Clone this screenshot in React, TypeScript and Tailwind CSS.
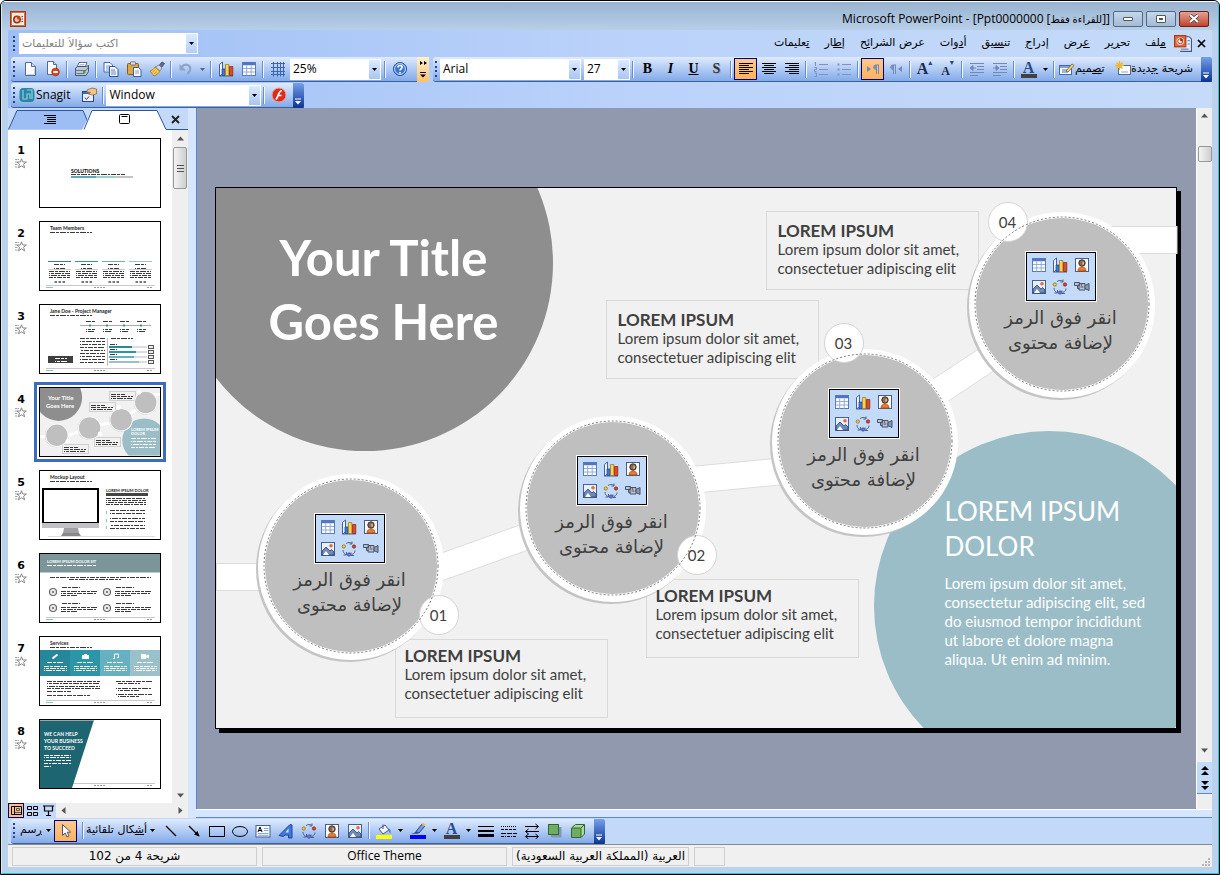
import React from 'react';

const UI = "font-['Open_Sans','DejaVu_Sans',sans-serif]";
const AR = "font-['DejaVu_Sans',sans-serif]";

/* ---------- icons ---------- */

interface IconProps {
  children: React.ReactNode;
  size?: string;
}

const Icon: React.FC<IconProps> = ({ children, size = 'size-4' }) => (
  <svg viewBox="0 0 16 16" className={`${size} shrink-0`} fill="none" aria-hidden="true">
    {children}
  </svg>
);

const PptIcon = () => (
  <Icon>
    <rect x="0.5" y="0.5" width="15" height="15" fill="#e8653a" stroke="#a93c17" />
    <rect x="2.5" y="2.5" width="11" height="11" fill="#fbe9df" stroke="#fff" />
    <circle cx="7" cy="8.5" r="3.2" fill="#f6c9a8" stroke="#a12f10" strokeWidth="1.6" />
    <path d="M7 8.5V5h0a3.5 3.5 0 0 1 3.3 3.5z" fill="#c9481f" />
    <path d="M11.5 5.5h1.5M11.5 8h1.5M11.5 10.5h1.5" stroke="#a12f10" />
  </Icon>
);

const PptDocIcon = () => (
  <Icon size="size-[18px]">
    <path d="M6.5 1.5h7l2 2v11h-10" fill="#e3ecfa" stroke="#3c5a8c" />
    <path d="M12 5h2M12 8h2M6 12.500h7" stroke="#6d87b3" />
    <rect x="0.5" y="0.5" width="10" height="10" fill="#e8653a" stroke="#a93c17" />
    <circle cx="5.5" cy="5.5" r="2.6" fill="#fff" stroke="#fbe0d2" strokeWidth="1.4" />
    <path d="M5.5 5.5V2.9A2.6 2.6 0 0 1 8 5.5z" fill="#9c3311" />
    <circle cx="5.5" cy="5.5" r="2.2" stroke="#9c3311" strokeWidth="0.8" />
  </Icon>
);

const NewIcon = () => (
  <Icon>
    <path d="M3.5 1.5h6l4 4v9h-10z" fill="#fff" stroke="#56698f" />
    <path d="M9.5 1.5v4h4" fill="#c9d9f1" stroke="#56698f" />
    <path d="M12.5 7v6.5H5" stroke="#c5d4ec" />
  </Icon>
);

const PermissionIcon = () => (
  <Icon>
    <path d="M2.5 0.5h6l3 3v10h-9z" fill="#fff" stroke="#56698f" />
    <path d="M8.5 0.5v3h3" fill="#c9d9f1" stroke="#56698f" />
    <circle cx="10.500" cy="11" r="3.800" fill="#e2481c" stroke="#a92c08" strokeWidth="0.8" />
    <path d="M8.300 11h4.400" stroke="#fff" strokeWidth="1.8" />
  </Icon>
);

const PrintIcon = () => (
  <Icon>
    <path d="M5 1.5h8l-2 5H3z" fill="#fff" stroke="#5f6d86" />
    <path d="M5.5 3.5h5M5 5h5" stroke="#9fb2d0" strokeWidth="0.8" />
    <path d="M1.5 7l2-1.5h9l2-1v6l-2.5 4h-10.5z" fill="#c0c8d8" stroke="#49566f" />
    <path d="M1.5 9.5h10.5l2-3M2.5 12.5h8" stroke="#67748e" />
    <path d="M9 11h2.5" stroke="#2fb32f" strokeWidth="1.8" />
  </Icon>
);

const CopyIcon = () => (
  <Icon>
    <path d="M1 1.5h6l2.5 2.5v7H1z" fill="#f5f9ff" stroke="#4a6ba8" />
    <path d="M3 5h4M3 7h4M3 9h3" stroke="#7b99cf" />
    <path d="M6.5 5.5h5.5l3 3v7h-8.5z" fill="#f5f9ff" stroke="#2f549b" />
    <path d="M8 9h4M8 11h5M8 13h5" stroke="#5f85c5" />
  </Icon>
);

const PasteIcon = () => (
  <Icon>
    <rect x="1.5" y="2.5" width="11" height="11" rx="1" fill="#e0a640" stroke="#8a5a12" />
    <rect x="4.5" y="0.8" width="5" height="3.2" rx="0.8" fill="#d6dbe4" stroke="#5d6673" strokeWidth="0.8" />
    <path d="M7.5 6.5h5l2.5 2.5v6.500h-7.500z" fill="#fff" stroke="#3d5d9a" />
    <path d="M9 10h4M9 12h4" stroke="#7b99cf" />
  </Icon>
);

const BrushIcon = () => (
  <Icon>
    <path d="M10 4.5l3-3.5 2.5 1.5-3 4z" fill="#5d6c94" stroke="#38456a" strokeWidth="0.8" />
    <path d="M6 6l4-2 3 3-2 3z" fill="#cfd6e6" stroke="#6d7894" strokeWidth="0.8" />
    <path d="M6 6l5 4.5c-2 2-4 4-6 4.5L1 10c2-.5 3.5-2 5-4z" fill="#f3cb58" stroke="#a67716" strokeWidth="0.9" />
    <path d="M3.5 11l3-2.5M5 13l3-2.5" stroke="#b98d22" strokeWidth="0.7" />
  </Icon>
);

const UndoIcon = () => (
  <Icon>
    <path d="M3.5 6.5C7 1.5 13.5 4 12 9.5L9.5 13" stroke="#8fa3ca" strokeWidth="2.2" />
    <path d="M1.5 3v6.5H8z" fill="#8fa3ca" />
  </Icon>
);

const ChartIcon = () => (
  <Icon>
    <path d="M1.5 3.5l3-2.500v12l-3 2z" fill="#eef3fc" stroke="#44619c" />
    <path d="M1.5 15h13.5" stroke="#44619c" />
    <path d="M4 8h3v6.5H4z" fill="#3f77dd" stroke="#1f4290" strokeWidth="0.7" />
    <path d="M7.5 3.5h3.3v11H7.5z" fill="#ffd34d" stroke="#98700f" strokeWidth="0.7" />
    <path d="M11.500 5.500h3.300v9h-3.300z" fill="#df4a26" stroke="#8a230c" strokeWidth="0.7" />
  </Icon>
);

const TableIcon = () => (
  <Icon>
    <rect x="1.5" y="1.5" width="13" height="13" fill="#fff" stroke="#5b7bb8" />
    <path d="M2 3h12" stroke="#4e76c4" strokeWidth="2.5" />
    <path d="M2 7.5h12M2 11h12M5.700 4.500v10M10.200 4.500v10" stroke="#8facdd" />
  </Icon>
);

const GridIcon = () => (
  <Icon>
    <path d="M1 2.5h14M1 6.5h14M1 10.5h14M1 13.500h14M3.5 1v14.5M7.5 1v14.500M10.5 1v14.5M13.5 1v14.5" stroke="#3d66ae" />
  </Icon>
);

const HelpIcon = () => (
  <Icon>
    <circle cx="8" cy="8" r="6.5" fill="#3a74d4" stroke="#1f4c9d" />
    <circle cx="8" cy="8" r="5.4" stroke="#cfe0fa" />
    <path d="M6 6.5c0-2.6 4.2-2.5 4.2-.2C10.2 7.8 8 7.7 8 9.6M8 11v1.6" stroke="#fff" strokeWidth="1.6" />
  </Icon>
);

const AlignIcon = ({ kind }: { kind: 'left' | 'center' | 'right' }) => {
  const short = {
    left: 'M1 4.5h10M1 8.5h10M1 12.5h10',
    center: 'M3 4.5h10M3 8.5h10M3 12.5h10',
    right: 'M5 4.5h10M5 8.5h10M5 12.5h10',
  }[kind];
  return (
    <Icon>
      <path d="M1 2.5h14M1 6.5h14M1 10.5h14" stroke="#000" />
      <path d={short} stroke="#000" />
    </Icon>
  );
};

const ListIcon = ({ numbered = false }: { numbered?: boolean }) => (
  <Icon>
    <path d="M6 3.5h9M6 8.5h9M6 13.5h9" stroke="#7f93be" />
    {numbered ? (
      <path d="M2.5 1v4M1.5 2h1M1.5 6.5h2v2h-2v2h2M1.5 12h2v3.500h-2" stroke="#7f93be" />
    ) : (
      <path d="M1.5 3.5h2M1.5 8.5h2M1.5 13.5h2" stroke="#7f93be" strokeWidth="2" />
    )}
  </Icon>
);

const ParagraphIcon = ({ rtl = false }: { rtl?: boolean }) => (
  <Icon>
    <g transform={rtl ? 'translate(5 0)' : 'translate(-1 0)'}>
      <path d="M9 4H5.500a2.300 2.300 0 0 0 0 4.500H6V4" fill="#8297c4" stroke="#7389b9" />
      <path d="M6.500 4v9M8.500 4v9" stroke="#7389b9" />
    </g>
    {rtl ? <path d="M2 5l4 3-4 3z" fill="#7389b9" /> : <path d="M14 5l-4 3 4 3z" fill="#7389b9" />}
  </Icon>
);

const IndentIcon = ({ flip = false }: { flip?: boolean }) => (
  <Icon>
    <path d="M1 2.5h14M8 5.5h7M8 8.5h7M1 11.5h14M1 14.5h8" stroke="#7389b9" />
    {flip ? <path d="M1 7h6M4 4.500v5l3-2.500z" fill="#7389b9" stroke="#7389b9" /> : <path d="M7 7H1M4 4.500v5L1 7z" fill="#7389b9" stroke="#7389b9" />}
  </Icon>
);

const DesignIcon = () => (
  <Icon>
    <rect x="0.5" y="4.5" width="12" height="9" fill="#fff" stroke="#4368aa" />
    <path d="M1 6h11" stroke="#7fa1de" strokeWidth="2" />
    <path d="M3 9h5M3 11h6" stroke="#4368aa" />
    <path d="M7 10l6-7 2 1.500-6 6.500z" fill="#ffd973" stroke="#6b5730" strokeWidth="0.8" />
  </Icon>
);

const NewSlideIcon = () => (
  <Icon>
    <rect x="3.5" y="4.5" width="12" height="9" fill="#fff" stroke="#56698f" />
    <path d="M6 11h7" stroke="#8ea3c8" />
    <path d="M4.5 0v9M0 4.5h9M1.5 1.5l6 6M7.5 1.5l-6 6" stroke="#f0b52c" strokeWidth="1.3" />
  </Icon>
);

const SnagitIcon = () => (
  <Icon>
    <rect x="0.5" y="1" width="15" height="14" rx="4" fill="#2a86a3" />
    <path d="M4 3v9h4V7h3v5M8 3h5v9" stroke="#8ccfe4" strokeWidth="1.2" />
  </Icon>
);

const HandIcon = () => (
  <Icon>
    <rect x="1.5" y="4.5" width="11" height="10" fill="#e8eefb" stroke="#27468c" />
    <path d="M2 6h10" stroke="#3f6bc0" strokeWidth="2" />
    <path d="M4 10.500l1.500 2L8 9.500" stroke="#27468c" />
    <path d="M6 3l5-2 4.500 1v5l-4 1-4-1 2-1.500L6 5z" fill="#f1c48d" stroke="#9b6730" strokeWidth="0.8" />
  </Icon>
);

const RecordIcon = () => (
  <Icon>
    <circle cx="8" cy="8" r="7" fill="#dc2c1c" stroke="#f4a191" />
    <path d="M11 3.5C7 4 8 9 5 12.5M6.5 8.5h4" stroke="#fff" strokeWidth="1.7" />
  </Icon>
);

const PersonIcon = () => (
  <Icon>
    <rect x="1.5" y="1.5" width="13" height="13" fill="#fbfbfb" stroke="#4b5d80" />
    <circle cx="8" cy="6" r="3.2" fill="#8a6a52" stroke="#3c3029" />
    <path d="M8.5 4.5a1.8 1.8 0 0 1 0 3.5z" fill="#f0c49c" />
    <path d="M4 14c0-5.5 8-5.5 8 0z" fill="#ed7a2d" stroke="#a6480c" strokeWidth="0.8" />
  </Icon>
);

const PictureIcon = () => (
  <Icon>
    <rect x="1.5" y="1.5" width="13" height="13" fill="#e6effc" stroke="#46618f" />
    <path d="M2 14V10l4-4 4 4 1.5-1.5L14 11v3z" fill="#6f89b8" stroke="#2f4572" strokeWidth="0.8" />
    <path d="M3 14l3-4 3 4z" fill="#fff" />
    <circle cx="11" cy="4.800" r="1.800" fill="#ee6a37" />
  </Icon>
);

const DiagramIcon = () => (
  <Icon>
    <path d="M5 2.500c2-1.300 4-1.300 6-.2M11 .5v2.500H8.500M2 9c0 2 1 3.500 2.800 4.500M5.500 11v3H2.500M14 9.500c0 2-1 3-3 4M13 14.500h-3v-3" stroke="#44577f" strokeWidth="0.900" />
    <circle cx="2.8" cy="5.5" r="1.7" fill="#efc23b" stroke="#7d5f10" strokeWidth="0.6" />
    <circle cx="13" cy="5.5" r="1.7" fill="#d9402a" stroke="#7b1b0e" strokeWidth="0.6" />
    <circle cx="8" cy="13.5" r="1.7" fill="#6777dd" stroke="#2b3690" strokeWidth="0.6" />
  </Icon>
);

const VideoIcon = () => (
  <Icon>
    <path d="M0.5 3.5h5v3h-5zM5 4.5h6v6.5H5z" fill="#b8c6d8" stroke="#45546c" />
    <path d="M11 6.5l4-2v7l-4-2z" fill="#8799b3" stroke="#45546c" />
    <path d="M6.5 8h3M3.5 6.5v3h2" stroke="#45546c" />
    <circle cx="7.5" cy="6" r="0.9" fill="#d9402a" />
  </Icon>
);

const CursorIcon = () => (
  <Icon>
    <path d="M4.5 1.5v11l2.7-2.5 1.8 4 2-1-1.8-3.8h3.5z" fill="#fff" stroke="#44577f" />
  </Icon>
);

const LineIcon = ({ arrow = false }: { arrow?: boolean }) => (
  <Icon>
    <path d="M3 3l10 10" stroke="#000" strokeWidth="1.2" />
    {arrow && <path d="M13.5 13.5L8 11.5l3.5-3.5z" fill="#000" />}
  </Icon>
);

const RectIcon = () => (
  <Icon>
    <rect x="0.5" y="3.500" width="15" height="10" stroke="#000" />
  </Icon>
);

const OvalIcon = () => (
  <Icon>
    <ellipse cx="8" cy="8.5" rx="7.5" ry="5" stroke="#000" />
  </Icon>
);

const TextBoxIcon = () => (
  <Icon>
    <rect x="1" y="2.5" width="14" height="11.5" fill="#f6f9ff" stroke="#46618f" />
    <path d="M3 9l2-5 2 5M4 7.5h2" stroke="#000" />
    <path d="M9 5.5h4.5M9 7.5h4.5M3 10.5h10.5M3 12.300h10.500" stroke="#8ea7d2" />
  </Icon>
);

const WordArtIcon = () => (
  <Icon>
    <path d="M1 12.5L12 1.5l2 .5v13h-3.5v-3H7l-1.5 1.5z" fill="#3e7ade" stroke="#1f4590" />
    <path d="M7.5 9.5h3v-4z" fill="#d9e7fd" />
  </Icon>
);

const BucketIcon = () => (
  <Icon>
    <path d="M3 6l6-4 4 5-6 4z" fill="#eef3fc" stroke="#44577f" />
    <path d="M7 6V1.5" stroke="#44577f" />
    <path d="M12.5 5.5c2 .5 2.5 3 2 5-1-.5-1.5-2-2-3.5z" fill="#3e7ade" />
    <path d="M0 14h16" stroke="#ffff00" strokeWidth="4" />
  </Icon>
);

const PenIcon = () => (
  <Icon>
    <path d="M6 8.5l6-7.5 3 2-6 7z" fill="#6f9be6" stroke="#26488e" />
    <path d="M11.500 1.500l1.500-1.500 2.500 2-1 1.500z" fill="#f0b52c" />
    <path d="M6 8.5l3 1.5c-2 1.2-4 .8-8 .5 2-.3 3.500-.5 5-2z" fill="#26488e" />
    <path d="M0 14h16" stroke="#0000ff" strokeWidth="4" />
  </Icon>
);

const WeightsIcon = () => (
  <Icon>
    <path d="M0 3.5h16" stroke="#000" />
    <path d="M0 8h16" stroke="#000" strokeWidth="2" />
    <path d="M0 12.5h16" stroke="#000" strokeWidth="3" />
  </Icon>
);

const DashesIcon = () => (
  <Icon>
    <path d="M0 3.5h16" stroke="#000" strokeDasharray="1 1" />
    <path d="M0 6.500h16" stroke="#000" strokeDasharray="3 1" />
    <path d="M0 10.5h16" stroke="#000" strokeDasharray="5 1" />
    <path d="M0 13.5h16" stroke="#000" strokeDasharray="3 1 1 1" />
  </Icon>
);

const ArrowsIcon = () => (
  <Icon>
    <path d="M1 3.500h13M11.500 1l3 2.500-3 2.500M2 8.500h13M4.500 6l-3 2.500 3 2.500M2 13.500h12M4.500 11l-3 2.500 3 2.500M11.500 11l3 2.500-3 2.500" stroke="#000" />
  </Icon>
);

const ShadowIcon = () => (
  <Icon>
    <rect x="4" y="4" width="10.5" height="10.5" fill="#8395b5" />
    <rect x="1.5" y="1.5" width="10" height="10" fill="#6fae62" stroke="#2f6a2c" />
  </Icon>
);

const CubeIcon = () => (
  <Icon>
    <path d="M1.5 5l4-3.5h9V11L11 14.5H1.5z" fill="#a9d89d" stroke="#2f6a2c" />
    <rect x="1.5" y="5" width="9.5" height="9.5" rx="1" fill="#6fae62" stroke="#2f6a2c" />
    <path d="M11 5l3.5-3.5" stroke="#2f6a2c" />
  </Icon>
);

const StarIcon = () => (
  <svg viewBox="0 0 12 11" className="mx-auto h-[11px] w-3" fill="none" aria-hidden="true">
    <path d="M6.5 0.8l1.3 3.2h3.6L8.6 6.2l1 3.6-3.1-2-3 2 1-3.6L2 4h3.3z" stroke="#7a7a7a" strokeWidth="0.9" />
    <path d="M0 1.5h4M0 4h2M0 6.5h3M0 9h3" stroke="#8a8a8a" strokeWidth="0.8" strokeDasharray="2 0.5" />
  </svg>
);

const Caret = () => (
  <svg viewBox="0 0 5 3" className="h-[3px] w-[5px] shrink-0" aria-hidden="true">
    <path d="M0 0h5L2.5 3z" fill="#000" />
  </svg>
);

/* ---------- toolbar parts ---------- */

const Grip = () => (
  <span className="mx-[2px] flex h-4 w-[3px] shrink-0 flex-col justify-between">
    {[0, 1, 2, 3].map((i) => (
      <span key={i} className="size-[2px] bg-[#27418f]" />
    ))}
  </span>
);

const Sep = () => <span className="mx-[2px] h-[17px] w-[2px] shrink-0 border-l border-[#6a8ccb] bg-[#f1f9ff]" />;

interface ToolProps {
  label: string;
  active?: boolean;
  children: React.ReactNode;
}

const Tool: React.FC<ToolProps> = ({ label, active, children }) => (
  <button
    type="button"
    title={label}
    aria-label={label}
    className={`flex h-[22px] w-[23px] shrink-0 items-center justify-center ${
      active ? 'border border-[#000080] bg-gradient-to-b from-[#ffc98a] to-[#ffb25a]' : ''
    }`}
  >
    {children}
  </button>
);

const DropTool = ({ label }: { label: string }) => (
  <button type="button" aria-label={label} className="flex h-[22px] w-[11px] shrink-0 items-center justify-center">
    <Caret />
  </button>
);

const BarEnd = ({ label }: { label: string }) => (
  <button
    type="button"
    aria-label={label}
    className="flex h-[25px] w-[11px] shrink-0 flex-col items-center justify-end gap-px rounded-r-[2px] bg-gradient-to-b from-[#76a0ea] to-[#0b3391] pb-[3px]"
  >
    <svg viewBox="0 0 7 7" className="size-[7px]" aria-hidden="true">
      <path d="M0 1h6" stroke="#fff" />
      <path d="M0 3h6L3 6.5z" fill="#fff" />
    </svg>
  </button>
);

interface ComboProps {
  label: string;
  value: string;
  width: string;
}

const Combo: React.FC<ComboProps> = ({ label, value, width }) => (
  <div className={`flex h-[21px] shrink-0 items-center border border-white bg-white ${width}`}>
    <select aria-label={label} defaultValue={value} className="h-full min-w-0 flex-1 appearance-none bg-white pl-[2px] text-xs leading-none outline-none">
      <option>{value}</option>
    </select>
    <span className="pointer-events-none flex h-full w-[11px] items-center justify-center bg-gradient-to-b from-[#dcebff] to-[#a9c5f3]">
      <Caret />
    </span>
  </div>
);

const BAR = 'flex h-[25px] items-center rounded-l-[3px] border-b border-[#3b619c] bg-gradient-to-b from-[#dfebfd] to-[#83aae9]';

/* ---------- title and menus ---------- */

const TitleBar = () => (
  <header className="flex h-[30px] shrink-0 items-center bg-gradient-to-b from-[#98b3d0] to-[#bbd1ea] pt-[3px] pr-[9px] pl-2">
    <PptIcon />
    <h1 className="ml-auto text-xs whitespace-nowrap text-black">
      Microsoft PowerPoint - [Ppt0000000 [<span className="text-[10px]">للقراءة فقط</span>]]
    </h1>
    <div className="ml-[3px] flex gap-[3px]">
      <button type="button" aria-label="Minimize" className="flex h-4 w-[30px] items-center justify-center rounded-[2px] border border-[#55687f] bg-gradient-to-b from-[#c4d7ec] to-[#a3bbd5]">
        <span className="h-[4px] w-[10px] rounded-[1px] border border-[#555] bg-white" />
      </button>
      <button type="button" aria-label="Restore" className="flex h-4 w-[30px] items-center justify-center rounded-[2px] border border-[#55687f] bg-gradient-to-b from-[#c4d7ec] to-[#a3bbd5]">
        <span className="flex h-[8px] w-[10px] items-center justify-center rounded-[1px] border border-[#555] bg-white">
          <span className="h-[2px] w-[4px] bg-[#555]" />
        </span>
      </button>
      <button type="button" aria-label="Close" className="flex h-4 w-[30px] items-center justify-center rounded-[2px] border border-[#6b2018] bg-gradient-to-b from-[#e2a091] to-[#c1412b]">
        <svg viewBox="0 0 12 9" className="h-[9px] w-3" aria-hidden="true">
          <path d="M2 1l8 7M10 1L2 8" stroke="#44414f" strokeWidth="3.6" />
          <path d="M2 1l8 7M10 1L2 8" stroke="#fff" strokeWidth="2.2" />
        </svg>
      </button>
    </div>
  </header>
);

const menus: [string, string, string][] = [
  ['', 'م', 'لف'],
  ['تح', 'ر', 'ير'],
  ['', 'ع', 'رض'],
  ['إدرا', 'ج', ''],
  ['تن', 'س', 'يق'],
  ['أ', 'د', 'وات'],
  ['عرض الشرا', 'ئ', 'ح'],
  ['إ', 'ط', 'ار'],
  ['', 'ت', 'عليمات'],
];

const MenuBar = () => (
  <div className="flex h-[27px] shrink-0 items-center pr-[6px] pl-[3px]">
    <Grip />
    <div className="ml-px flex h-[21px] w-[179px] items-center border border-white bg-white">
      <input
        aria-label="اكتب سؤالاً للتعليمات"
        placeholder="اكتب سؤالاً للتعليمات"
        className={`h-full min-w-0 flex-1 pl-[2px] text-[11px] outline-none placeholder:text-[#808080] ${AR}`}
      />
      <button type="button" aria-label="Recent questions" className="flex h-full w-[11px] items-center justify-center bg-gradient-to-b from-[#dcebff] to-[#b5cef7]">
        <Caret />
      </button>
    </div>
    <nav dir="rtl" className={`ml-auto flex items-center text-[11px] ${AR}`}>
      <button type="button" aria-label="Close document" className="w-[10px]">
        <svg viewBox="0 0 9 9" className="size-[9px]" aria-hidden="true">
          <path d="M1 1l7 7M8 1L1 8" stroke="#000" strokeWidth="1.7" />
        </svg>
      </button>
      <span className="mr-1 ml-2">
        <PptDocIcon />
      </span>
      <div className="flex gap-[15px]">
        {menus.map(([before, key, after]) => (
          <button key={before + key + after} type="button" className="whitespace-nowrap">
            {before}
            <u>{key}</u>
            {after}
          </button>
        ))}
      </div>
    </nav>
  </div>
);

const StandardBar = () => (
  <div className="flex h-[26px] shrink-0 items-start pl-[3px]">
    <div className={BAR}>
      <Grip />
      <Tool label="New"><NewIcon /></Tool>
      <Tool label="Permission"><PermissionIcon /></Tool>
      <Sep />
      <Tool label="Print"><PrintIcon /></Tool>
      <Sep />
      <Tool label="Copy"><CopyIcon /></Tool>
      <Tool label="Paste"><PasteIcon /></Tool>
      <Tool label="Format Painter"><BrushIcon /></Tool>
      <Sep />
      <Tool label="Undo"><UndoIcon /></Tool>
      <span className="opacity-50"><DropTool label="Undo list" /></span>
      <Sep />
      <Tool label="Insert Chart"><ChartIcon /></Tool>
      <Tool label="Insert Table"><TableIcon /></Tool>
      <Sep />
      <Tool label="Show Grid"><GridIcon /></Tool>
      <Combo label="Zoom" value="25%" width="mx-px w-[91px]" />
      <Sep />
      <Tool label="Help"><HelpIcon /></Tool>
      <button
        type="button"
        aria-label="More standard buttons"
        className="ml-[6px] flex h-[25px] w-3 flex-col items-center justify-between bg-gradient-to-b from-[#fff1d0] to-[#ffc06a] py-1"
      >
        <svg viewBox="0 0 7 4" className="h-1 w-[7px]" aria-hidden="true">
          <path d="M0 0l3 2-3 2zM4 0l3 2-3 2z" fill="#000" />
        </svg>
        <svg viewBox="0 0 6 6" className="size-[6px]" aria-hidden="true">
          <path d="M0 0.5h6" stroke="#000" />
          <path d="M0 2.5h6L3 5.5z" fill="#000" />
        </svg>
      </button>
    </div>

    <div className={`${BAR} ml-1 min-w-0 flex-1`}>
      <Grip />
      <Combo label="Font" value="Arial" width="mr-[3px] w-[141px]" />
      <Combo label="Font size" value="27" width="w-[46px]" />
      <Sep />
      <Tool label="Bold"><b className="font-['Liberation_Serif',serif] text-sm">B</b></Tool>
      <Tool label="Italic"><i className="font-['Liberation_Serif',serif] text-sm font-bold">I</i></Tool>
      <Tool label="Underline"><b className="font-['Liberation_Serif',serif] text-sm underline">U</b></Tool>
      <Tool label="Shadow"><b className="font-['Liberation_Serif',serif] text-sm text-[#333] [text-shadow:1px_1px_0_#8fa5cc]">S</b></Tool>
      <Sep />
      <Tool label="Align Left" active><AlignIcon kind="left" /></Tool>
      <Tool label="Center"><AlignIcon kind="center" /></Tool>
      <Tool label="Align Right"><AlignIcon kind="right" /></Tool>
      <Sep />
      <Tool label="Numbering"><ListIcon numbered /></Tool>
      <Tool label="Bullets"><ListIcon /></Tool>
      <Sep />
      <Tool label="Left-to-Right" active><ParagraphIcon rtl /></Tool>
      <Tool label="Right-to-Left"><ParagraphIcon /></Tool>
      <Sep />
      <Tool label="Increase Font Size">
        <b className="font-['Liberation_Serif',serif] text-base text-[#1d2b4c]">A</b>
        <span className="self-start text-[8px] leading-[8px] text-[#27418f]">▴</span>
      </Tool>
      <Tool label="Decrease Font Size">
        <b className="pt-1 font-['Liberation_Serif',serif] text-xs text-[#1d2b4c]">A</b>
        <span className="self-start text-[8px] leading-[8px] text-[#27418f]">▾</span>
      </Tool>
      <Sep />
      <Tool label="Decrease Indent"><IndentIcon /></Tool>
      <Tool label="Increase Indent"><IndentIcon flip /></Tool>
      <Sep />
      <Tool label="Font Color">
        <b className="w-4 border-b-4 border-[#404040] font-['Liberation_Serif',serif] text-base leading-[13px] text-[#2c4a8f]">A</b>
      </Tool>
      <DropTool label="Font color list" />
      <Sep />
      <button type="button" className={`ml-[2px] flex shrink-0 items-center text-[11px] whitespace-nowrap ${AR}`}>
        <DesignIcon />
        <span>ت<u>ص</u>ميم</span>
      </button>
      <button type="button" className={`ml-auto flex shrink-0 items-center text-[11px] whitespace-nowrap ${AR}`}>
        <NewSlideIcon />
        <span>شريحة <u>ج</u>ديدة</span>
      </button>
      <span className="ml-2 self-start"><BarEnd label="More formatting buttons" /></span>
    </div>
  </div>
);

const SnagitBar = () => (
  <div className="flex h-[25px] shrink-0 pl-[3px]">
    <div className={BAR}>
      <Grip />
      <button type="button" className="ml-px flex items-center gap-px text-xs">
        <SnagitIcon />
        Snagit
      </button>
      <span className="ml-[7px]"><Tool label="Profile settings"><HandIcon /></Tool></span>
      <Sep />
      <Combo label="Snagit profile" value="Window" width="w-[155px]" />
      <Sep />
      <Tool label="Capture"><RecordIcon /></Tool>
      <span className="ml-[3px] self-start"><BarEnd label="More Snagit buttons" /></span>
    </div>
  </div>
);

/* ---------- slide ---------- */

const nodes = [
  { label: '01', x: 134, y: 380, bx: 223, by: 427 },
  { label: '02', x: 396, y: 322, bx: 481, by: 367 },
  { label: '03', x: 648, y: 255, bx: 628, by: 155 },
  { label: '04', x: 845, y: 118, bx: 792, by: 34 },
];

const callouts = [
  { left: 179, top: 451, pad: 'pt-[6px] pl-[9px]' },
  { left: 430, top: 391, pad: 'pt-[6px] pl-[9px]' },
  { left: 390, top: 112, pad: 'pt-[9px] pl-[11px]' },
  { left: 550, top: 23, pad: 'pt-[9px] pl-[11px]' },
];

const SlideShapes = ({ id, outline }: { id: string; outline?: boolean }) => (
  <>
    <clipPath id={id}>
      <rect width="960" height="540" />
    </clipPath>
    <g clipPath={`url(#${id})`}>
      <circle cx="149" cy="75" r="188" fill="#8e8e8e" />
      <circle cx="833" cy="418" r="175" fill="#9abdc7" />
    </g>
    <g fill="#fff" stroke="#dcdcdc">
      <rect x="0.5" y="375.5" width="134" height="27" />
      <path d="M150 392L396 304V332L150 420z" />
      <path d="M396 286L648 262V289L396 313z" />
      <path d="M650 235L845 107V138L650 268z" />
      <rect x="845" y="38.5" width="116" height="27" />
    </g>
    {nodes.map((n) => (
      <g key={n.label}>
        <circle cx={n.x - 1} cy={n.y + 1} r="93" fill="#c4c4c4" />
        <circle cx={n.x + 1} cy={n.y - 1} r="93" fill="#fff" />
        <circle cx={n.x + 1} cy={n.y - 2} r="86" fill="#bfbfbf" />
      </g>
    ))}
    {nodes.map((n) => (
      <circle key={n.label} cx={n.bx} cy={n.by} r="19.5" fill="#fff" stroke="#d4d4d4" />
    ))}
    {outline &&
      nodes.map((n) => (
        <circle key={n.label} cx={n.x + 1} cy={n.y - 2} r="87" fill="none" stroke="#777" strokeDasharray="2 2" />
      ))}
  </>
);

const PlaceholderPalette = () => (
  <div className="grid h-[49px] w-[70px] grid-cols-3 place-items-center border border-black bg-[#c3daf9] px-[2px] py-px outline-1 outline-white">
    <TableIcon />
    <ChartIcon />
    <PersonIcon />
    <PictureIcon />
    <DiagramIcon />
    <VideoIcon />
  </div>
);

const Slide = () => (
  <article className="relative isolate h-[542px] w-[962px] shrink-0 border border-black bg-[#f1f1f1] font-['Lato','DejaVu_Sans',sans-serif] text-[#404040] shadow-[4px_4px_0_#000]">
    {callouts.map((c) => (
      <section key={c.left} className={`absolute h-[79px] w-[213px] border border-[#d9d9d9] ${c.pad}`} style={{ left: c.left, top: c.top }}>
        <h3 className="relative z-20 text-[17px] leading-[19px] font-bold whitespace-nowrap">LOREM IPSUM</h3>
        <p className="relative z-20 text-[15px] leading-[19px] whitespace-nowrap">
          Lorem ipsum dolor sit amet,
          <br />
          consectetuer adipiscing elit
        </p>
      </section>
    ))}

    <svg viewBox="0 0 960 540" className="absolute inset-0 z-10 h-[540px] w-[960px] overflow-visible" aria-hidden="true">
      <SlideShapes id="slide-main" outline />
    </svg>

    <h2 className="absolute top-[37px] left-[28px] z-20 w-[280px] text-center text-[49px] leading-[64px] font-bold text-white">
      Your Title
      <br />
      Goes Here
    </h2>

    {nodes.map((n) => (
      <div key={n.label} className="absolute z-20 flex w-[140px] flex-col items-center" style={{ left: n.x - 70, top: n.y - 54 }}>
        <PlaceholderPalette />
        <p dir="rtl" className={`mt-[4px] text-center text-[18px] leading-[25px] whitespace-nowrap ${AR}`}>
          انقر فوق الرمز
          <br />
          لإضافة محتوى
        </p>
      </div>
    ))}

    {nodes.map((n) => (
      <span key={n.label} className="absolute z-20 w-8 text-center text-[15px] leading-5" style={{ left: n.bx - 16, top: n.by - 10 }}>
        {n.label}
      </span>
    ))}

    <section className="absolute top-[306px] left-[729px] z-20 w-[225px] text-white">
      <h3 className="text-[26px] leading-[35px]">
        LOREM IPSUM
        <br />
        DOLOR
      </h3>
      <p className="mt-[10px] text-[15px] leading-[19px] whitespace-nowrap">
        Lorem ipsum dolor sit amet,
        <br />
        consectetur adipiscing elit, sed
        <br />
        do eiusmod tempor incididunt
        <br />
        ut labore et dolore magna
        <br />
        aliqua. Ut enim ad minim.
      </p>
    </section>
  </article>
);

/* ---------- slide list ---------- */

interface LinesProps {
  x: number;
  w: number;
  ys: number[];
  c?: string;
}

// Greeked body text
const Lines: React.FC<LinesProps> = ({ x, w, ys, c = '#3a3a3a' }) => (
  <>
    {ys.map((y, i) => (
      <path key={y} d={`M${x} ${y}h${w}`} stroke={c} strokeDasharray="5 1 3 1 6 1 2 1" strokeDashoffset={i * 4} />
    ))}
  </>
);

const Footer = () => (
  <>
    <path d="M6 63.5h109" stroke="#c9c9c9" />
    <path d="M6 65.5h7" stroke="#8fc3cc" />
    <path d="M54 65.5h12M107 65.5h6" stroke="#999" strokeDasharray="2 1" />
  </>
);

const Heading = ({ children }: { children: string }) => (
  <>
    <text x="10" y="8" fontSize="5" fontWeight="700" fill="#222">{children}</text>
    <Lines x={10} w={42} ys={[10.5]} />
  </>
);

const teal = ['#26869a', '#2b96a8', '#66b1c1', '#9ac0c9'];

const thumbs: React.ReactNode[] = [
  <>
    <text x="31" y="34" fontSize="5" fontWeight="900" fill="#111">SOLUTIONS</text>
    <Lines x={31} w={54} ys={[35.5]} />
    <path d="M31 38h25" stroke="#2a8f9f" strokeWidth="1.500" />
    <path d="M56 38h18" stroke="#7fbcc6" strokeWidth="1.500" />
    <path d="M74 38h19" stroke="#888" />
  </>,
  <>
    <Heading>Team Members</Heading>
    {teal.map((c, i) => (
      <g key={c} transform={`translate(${8 + i * 27} 0)`}>
        <path d="M0 39.5h23" stroke={c} />
        <Lines x={6} w={11} ys={[42.5, 46.5]} />
        <path d="M0 47.5h23" stroke="#ccc" />
        <Lines x={1} w={21} ys={[49.5, 51.5, 53.5, 55.5]} />
        <path d="M6.500 60h11" stroke="#777" strokeWidth="2" strokeDasharray="2.500 1.500" />
      </g>
    ))}
    <Footer />
  </>,
  <>
    <Heading>Jane Doe - Project Manager</Heading>
    <path d="M40 20.5h71" stroke="#aaa" />
    {[50, 67, 84, 101].map((x) => (
      <g key={x}>
        <rect x={x - 1} y="19.500" width="2" height="2" fill="#2f97a8" />
        <Lines x={x - 4} w={9} ys={[16.5, 24.5, 26.5]} />
      </g>
    ))}
    <Lines x={40} w={25} ys={[33.5, 36.5, 39.5, 42.5, 45.5, 48.5, 51.5, 54.5, 57.5]} />
    <path d="M67.5 33v28" stroke="#bbb" />
    <Lines x={71} w={22} ys={[33.5]} />
    {[23, 27, 25, 30].map((w, i) => (
      <g key={w}>
        <path d={`M69 ${42 + i * 5}h38`} stroke="#ddd" strokeWidth="2" />
        <path d={`M69 ${42 + i * 5}h${w}`} stroke={teal[i]} strokeWidth="2" />
        <Lines x={70} w={7} ys={[39.5 + i * 5]} />
        <rect x="108.500" y={40.5 + i * 5} width="5" height="3" fill="#eee" stroke="#555" />
      </g>
    ))}
    <rect x="8" y="51" width="25" height="7" fill="#3f3f3f" />
    <Lines x={15} w={12} ys={[53.5, 56.5]} c="#fff" />
    <Footer />
  </>,
  <>
    <rect width="120" height="68" fill="#f1f1f1" />
    {callouts.map((c) => (
      <g key={c.left} transform={`translate(${Math.round(c.left / 8)} ${Math.round(c.top / 8)})`}>
        <rect x="0.5" y="0.5" width="26" height="9" stroke="#d0d0d0" fill="none" />
        <Lines x={2} w={14} ys={[3.5]} />
        <Lines x={2} w={22} ys={[5.5, 7.5]} />
      </g>
    ))}
    <g transform="scale(0.125)">
      <SlideShapes id="slide-thumb" />
    </g>
    <g fill="#fff" fontWeight="700">
      <text x="8" y="12" fontSize="6">Your Title</text>
      <text x="6" y="20" fontSize="6">Goes Here</text>
      <text x="91" y="43" fontSize="4">LOREM IPSUM</text>
      <text x="91" y="47" fontSize="4">DOLOR</text>
    </g>
    <Lines x={91} w={25} ys={[50.5, 53.5, 56.5, 59.5]} c="#fff" />
  </>,
  <>
    <Heading>Mockup Layout</Heading>
    <path d="M8 65.5h107" stroke="#ddd" />
    <rect x="3" y="18" width="55" height="34" fill="#fff" stroke="#000" strokeWidth="2" />
    <rect x="2" y="52" width="57" height="5" fill="#c2c2c4" />
    <path d="M24 57h14l1 5H23z" fill="#a0a0a2" />
    <path d="M23 62h16l2 3H21z" fill="#88888a" />
    <text x="66" y="21" fontSize="4" fontWeight="700" fill="#222">LOREM IPSUM DOLOR</text>
    <rect x="66" y="22" width="42" height="3" fill="#444" />
    <Lines x={66} w={40} ys={[27.5, 29.5, 31.5, 33.5]} />
    <Lines x={70} w={35} ys={[39.5, 42.5, 47.5, 50.5, 54.5, 57.5]} />
    <path d="M66.5 40v3M66.5 48v3M66.5 55v3" stroke="#8fc3cc" />
  </>,
  <>
    <rect width="120" height="18" fill="#7b9598" />
    <path d="M0 18.5h120" stroke="#b5cdd1" />
    <text x="7" y="9" fontSize="4" fontWeight="700" fill="#fff">LOREM IPSUM DOLOR SIT</text>
    <Lines x={7} w={50} ys={[11.5]} c="#fff" />
    <Lines x={10} w={101} ys={[23.5]} />
    <Lines x={29} w={52} ys={[25.5]} />
    {[[13, 38], [67, 38], [13, 54], [67, 54]].map(([x, y]) => (
      <g key={`${x}-${y}`}>
        <circle cx={x} cy={y} r="3.5" fill="#eee" stroke="#666" strokeWidth="1.2" />
        <circle cx={x} cy={y} r="1" fill="#555" />
        <Lines x={x + 9} w={18} ys={[y - 4.5]} />
        <Lines x={x + 8} w={36} ys={[y - 0.5, y + 1.5]} />
        <Lines x={x + 8} w={16} ys={[y + 3.5]} />
      </g>
    ))}
    <Footer />
  </>,
  <>
    <Heading>Services</Heading>
    {teal.map((c, i) => (
      <g key={c} transform={`translate(${i * 30} 0)`}>
        <rect y="13" width="30" height="26" fill={c} />
        {i === 0 && <path d="M12.5 21.5l5-4" stroke="#fff" strokeWidth="2" />}
        {i === 1 && <path d="M12 18h2v-1h3v1h2v4h-7z" fill="#fff" />}
        {i === 2 && <path d="M14.5 21v-4h4v3M13 21.5h2M17 20.5h2" stroke="#fff" />}
        {i === 3 && <path d="M11 17h5v1.5l3-1v4l-3-1V22h-5z" fill="#fff" />}
        <Lines x={7} w={17} ys={[25.5]} c="#fff" />
        <Lines x={4} w={23} ys={[29.5, 31.5, 33.5]} c="#fff" />
      </g>
    ))}
    <Lines x={7} w={53} ys={[44.5, 46.5, 49.5, 51.5]} />
    <Lines x={7} w={24} ys={[54.5]} />
    <Lines x={7} w={43} ys={[58.5]} />
    <Lines x={76} w={36} ys={[44.5, 51.5, 57.5]} />
    <Lines x={78} w={22} ys={[46.5, 53.5, 59.5]} />
    <Footer />
  </>,
  <>
    <Footer />
    <path d="M0 0h54L32 68H0z" fill="#1e6572" />
    <path d="M0 0.5h54" stroke="#9aa" />
    <g fill="#fff" fontSize="5" fontWeight="700">
      <text x="4" y="16">WE CAN HELP</text>
      <text x="4" y="23">YOUR BUSINESS</text>
      <text x="4" y="30">TO SUCCEED</text>
    </g>
    <Lines x={4} w={27} ys={[35.5, 37.5, 40.5, 43.5]} c="#fff" />
    <Lines x={4} w={7} ys={[46.5]} c="#fff" />
  </>,
];

const SlideList = () => (
  <ol className="flex min-h-0 flex-1 flex-col overflow-hidden bg-white pt-[3px]">
    {thumbs.map((art, i) => (
      <li key={i} className="flex h-[83px] shrink-0">
        <div className="w-[26px] shrink-0 pt-[11px] text-center text-[11px] leading-[14px] font-bold text-black font-['DejaVu_Sans',sans-serif]">
          {i + 1}
          <StarIcon />
        </div>
        <button
          type="button"
          aria-label={`Slide ${i + 1}`}
          className={`h-[80px] w-[132px] border-[3px] p-[2px] ${i === 3 ? 'border-[#3d6bc0]' : 'border-transparent'}`}
        >
          <svg viewBox="0 0 120 68" className="h-[70px] w-[122px] border border-black font-['Lato',sans-serif]" fill="none">
            {art}
          </svg>
        </button>
      </li>
    ))}
  </ol>
);

const ScrollArrow = ({ d, label }: { d: string; label: string }) => (
  <button type="button" aria-label={label} className="flex size-[15px] shrink-0 items-center justify-center">
    <svg viewBox="0 0 7 7" className="size-[7px]" aria-hidden="true">
      <path d={d} fill="#555" />
    </svg>
  </button>
);

const UP = 'M0 5.5h7L3.5 1.5z';
const DOWN = 'M0 1.5h7L3.5 5.5z';

const SidePanel = () => (
  <aside className="flex w-[180px] shrink-0 flex-col">
    <div className="relative flex h-[22px] shrink-0 items-center bg-[#c4dafa]">
      <svg viewBox="0 0 180 22" className="absolute inset-0 h-[22px] w-[180px]" aria-hidden="true">
        <path d="M0.5 21.5L9 2.5h66l8 19" fill="#9dbdf5" stroke="#2d569f" />
        <path d="M74 22L84 2.5h65l9 19h22V22z" fill="#fff" />
        <path d="M76 21.5L84 2.5h65l9 19h22" fill="none" stroke="#2d569f" />
      </svg>
      <button type="button" aria-label="Outline" className="relative flex w-[83px] justify-center pt-px">
        <svg viewBox="0 0 12 10" className="h-[10px] w-3" aria-hidden="true">
          <path d="M0 0.5h12M3 2.5h9M3 4.5h9M3 6.5h9M0 8.5h12" stroke="#000" />
        </svg>
      </button>
      <button type="button" aria-label="Slides" className="relative flex w-[66px] justify-center pt-px">
        <svg viewBox="0 0 11 11" className="size-[11px]" fill="none" aria-hidden="true">
          <rect x="0.5" y="0.5" width="10" height="9" rx="1" stroke="#000" />
          <path d="M2.5 2.5h6" stroke="#000" />
        </svg>
      </button>
      <button type="button" aria-label="Close pane" className="relative ml-auto w-6 pl-[7px]">
        <svg viewBox="0 0 9 9" className="size-[9px]" aria-hidden="true">
          <path d="M1 1l7 7M8 1L1 8" stroke="#222" strokeWidth="1.9" />
        </svg>
      </button>
    </div>
    <div className="flex min-h-0 flex-1">
      <SlideList />
      <div className="flex w-4 shrink-0 flex-col items-center bg-[#efefef] pt-px">
        <ScrollArrow d={UP} label="Scroll up" />
        <span className="mt-px flex h-[42px] w-[14px] shrink-0 flex-col items-center justify-center gap-[2px] rounded-[2px] border border-[#979797] bg-gradient-to-r from-[#f4f4f4] to-[#cfcfcf]">
          <span className="h-px w-[7px] bg-[#555]" />
          <span className="h-px w-[7px] bg-[#555]" />
          <span className="h-px w-[7px] bg-[#555]" />
        </span>
        <span className="flex-1" />
        <ScrollArrow d={DOWN} label="Scroll down" />
      </div>
    </div>
    <div className="flex h-[15px] shrink-0 items-center bg-[#efefef]">
      <div className="flex h-full bg-[#c4dafa]">
        <button type="button" aria-label="Normal view" className="flex h-[15px] w-4 items-center justify-center border border-[#000080] bg-[#ffc078]">
          <svg viewBox="0 0 11 9" className="h-[9px] w-[11px]" fill="none" aria-hidden="true">
            <path d="M0.5 0.5h10v8h-10zM3.5 0.5v8" stroke="#000" />
            <path d="M5.5 2.5h3v2h-3zM4 6.500h6" stroke="#555" />
          </svg>
        </button>
        <button type="button" aria-label="Slide sorter" className="flex h-[15px] w-4 items-center justify-center">
          <svg viewBox="0 0 11 10" className="h-[10px] w-[11px]" fill="none" aria-hidden="true">
            <path d="M0.5 0.5h4v3h-4zM6.5 0.5h4v3h-4zM0.5 6.5h4v3h-4zM6.5 6.5h4v3h-4z" stroke="#000" />
          </svg>
        </button>
        <button type="button" aria-label="Slide show" className="flex h-[15px] w-4 items-center justify-center">
          <svg viewBox="0 0 11 11" className="size-[11px]" fill="none" aria-hidden="true">
            <path d="M0 1h11M1.5 1v5h8V1M5.5 6v4M3 10.500h5" stroke="#000" strokeWidth="1.2" />
          </svg>
        </button>
      </div>
      <ScrollArrow d="M5.5 0v7L1.5 3.5z" label="Scroll left" />
      <span className="flex-1" />
      <ScrollArrow d="M1.5 0v7l4-3.5z" label="Scroll right" />
    </div>
  </aside>
);

const DoubleArrow = ({ up }: { up?: boolean }) => (
  <button type="button" aria-label={up ? 'Previous slide' : 'Next slide'} className="flex h-[15px] w-4 items-center justify-center">
    <svg viewBox="0 0 8 9" className="h-[9px] w-2" aria-hidden="true">
      {up ? <path d="M0 4L4 0l4 4zM0 9l4-4 4 4z" /> : <path d="M0 0h8L4 4zM0 5h8L4 9z" />}
    </svg>
  </button>
);

const Workspace = () => (
  <main className="flex min-w-0 flex-1 flex-col">
    <div className="flex min-h-0 flex-1">
      <div className="flex min-w-0 flex-1 items-center justify-center overflow-hidden border-l border-[#5b86d8] bg-[#9199ae] pr-[2px] pb-[2px]">
        <Slide />
      </div>
      <div className="flex w-4 shrink-0 flex-col items-center border-l border-white bg-[#efefef]">
        <ScrollArrow d={UP} label="Scroll up" />
        <span className="mt-[23px] h-4 w-[14px] rounded-[2px] border border-[#979797] bg-gradient-to-r from-[#f4f4f4] to-[#cfcfcf]" />
        <span className="flex-1" />
        <ScrollArrow d={DOWN} label="Scroll down" />
        <div className="mt-1 mb-[15px] flex h-8 w-full flex-col justify-center border-b border-[#5b86d8] bg-[#c4dafa]">
          <DoubleArrow up />
          <DoubleArrow />
        </div>
      </div>
    </div>
    <div className="h-[9px] shrink-0 border-t border-b border-t-white border-b-[#5b86d8] bg-[#d6e6fd]" />
  </main>
);

/* ---------- bottom bars ---------- */

const DrawingBar = () => (
  <div className="flex h-[27px] shrink-0 items-center border-b border-[#8a8a8a] bg-[#c2d9f9] pl-[3px]">
    <div className={BAR}>
      <Grip />
      <button type="button" className={`ml-[2px] flex w-[31px] shrink-0 items-center justify-between text-[11px] ${AR}`}>
        <span><u>ر</u>سم</span>
        <Caret />
      </button>
      <span className="mx-[3px]"><Tool label="Select" active><CursorIcon /></Tool></span>
      <Sep />
      <button type="button" className={`mr-1 flex shrink-0 items-center gap-[3px] text-[11px] whitespace-nowrap ${AR}`}>
        <span>أ<u>ش</u>كال تلقائية</span>
        <Caret />
      </button>
      <Tool label="Line"><LineIcon /></Tool>
      <Tool label="Arrow"><LineIcon arrow /></Tool>
      <Tool label="Rectangle"><RectIcon /></Tool>
      <Tool label="Oval"><OvalIcon /></Tool>
      <Tool label="Text Box"><TextBoxIcon /></Tool>
      <Tool label="WordArt"><WordArtIcon /></Tool>
      <Tool label="Diagram"><DiagramIcon /></Tool>
      <Tool label="Clip Art"><PersonIcon /></Tool>
      <Tool label="Picture"><PictureIcon /></Tool>
      <Sep />
      <Tool label="Fill Color"><BucketIcon /></Tool>
      <DropTool label="Fill color list" />
      <Tool label="Line Color"><PenIcon /></Tool>
      <DropTool label="Line color list" />
      <Tool label="Font Color">
        <b className="w-4 border-b-4 border-[#404040] font-['Liberation_Serif',serif] text-base leading-[13px] text-[#2c4a8f]">A</b>
      </Tool>
      <DropTool label="Text color list" />
      <Tool label="Line Style"><WeightsIcon /></Tool>
      <Tool label="Dash Style"><DashesIcon /></Tool>
      <Tool label="Arrow Style"><ArrowsIcon /></Tool>
      <Tool label="Shadow Style"><ShadowIcon /></Tool>
      <Tool label="3-D Style"><CubeIcon /></Tool>
      <span className="ml-[5px] self-start"><BarEnd label="More drawing buttons" /></span>
    </div>
  </div>
);

const PANE = 'flex h-[19px] shrink-0 items-center justify-center border border-[#cfcfcf] whitespace-nowrap';

const StatusBar = () => (
  <footer className="flex h-[22px] shrink-0 items-center gap-[5px] bg-[#f0f0f0] pl-1 text-xs">
    <div dir="rtl" className={`w-[245px] ${PANE} ${AR}`}>شريحة 4 من 102</div>
    <div className={`w-[245px] ${PANE}`}>Office Theme</div>
    <div dir="rtl" className={`w-[177px] ${PANE} ${AR}`}>العربية (المملكة العربية السعودية)</div>
    <div className={`w-[31px] ${PANE}`} />
    <svg viewBox="0 0 10 10" className="mr-px ml-auto size-[10px] self-end" aria-hidden="true">
      <path d="M7 1h2v2H7zM4 4h2v2H4zM7 4h2v2H7zM1 7h2v2H1zM4 7h2v2H4zM7 7h2v2H7z" fill="#b8b8b8" />
    </svg>
  </footer>
);

const App: React.FC = () => (
  <div className={`h-screen overflow-hidden rounded-t-[6px] border border-black bg-[#bad2eb] text-black ${UI}`}>
    <div className="flex h-full flex-col rounded-t-[5px] border border-t-white border-r-[#21c5e6] border-b-[#21c5e6] border-l-[#d5ecf8]">
      <TitleBar />
      <div className="mx-[6px] mb-[6px] -mt-[2px] flex min-h-0 flex-1 flex-col">
        <div className="bg-gradient-to-r from-[#9ebef5] via-[#bad2fa] to-[#c5dbf9]">
          <MenuBar />
          <StandardBar />
          <SnagitBar />
        </div>
        <div className="flex min-h-0 flex-1">
          <SidePanel />
          <div className="w-[8px] shrink-0 bg-[#d6e6fd]" />
          <Workspace />
        </div>
        <DrawingBar />
        <StatusBar />
      </div>
    </div>
  </div>
);

export default App;
